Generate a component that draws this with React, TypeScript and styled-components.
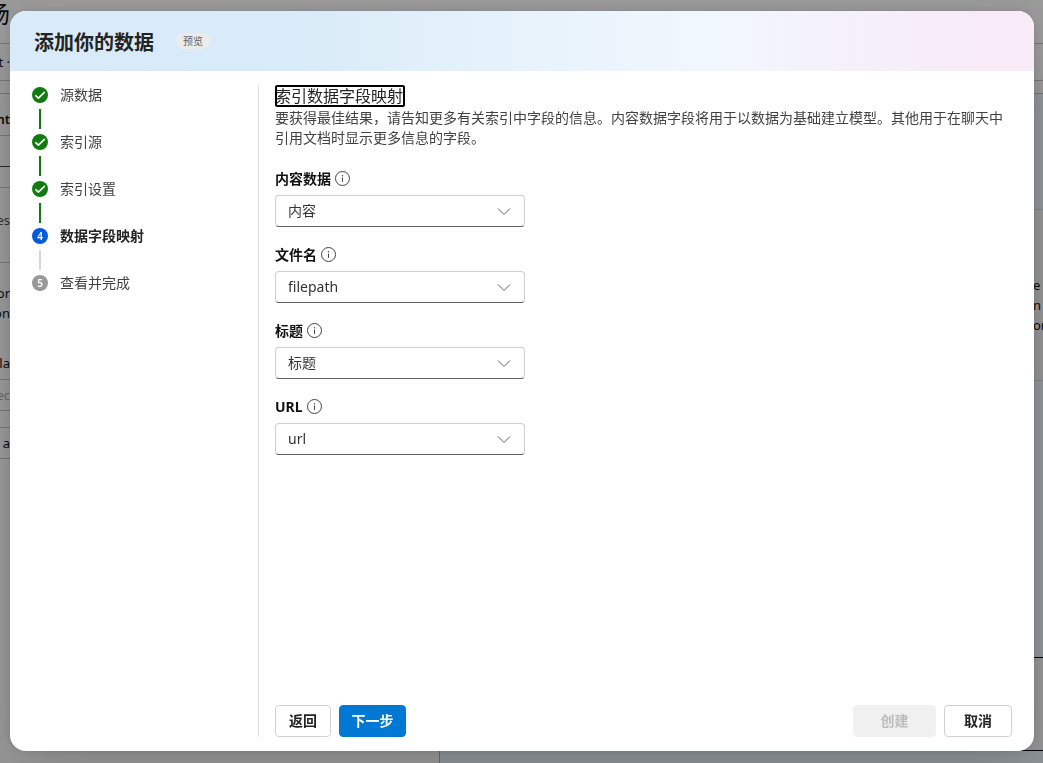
import React from "react";
import styled, { createGlobalStyle, css } from "styled-components";

const GlobalStyle = createGlobalStyle`
  *, *::before, *::after { box-sizing: border-box; }
  html, body, #root { height: 100%; }
  body {
    margin: 0;
    overflow: hidden;
    background: #fff;
    color: #242424;
    font-family: "Noto Sans", "Noto Sans CJK SC", sans-serif;
    font-size: 14px;
    line-height: 20px;
  }
  button, select { font: inherit; }
  h1, h2, p, ol { margin: 0; padding: 0; }
`;

/* ---------- Page behind the dialog ---------- */

const Page = styled.div`
  height: 100%;
  display: flex;
  flex-direction: column;
  overflow: hidden;
  color: #111;
  font-size: 13px;
`;

const PageBar = styled.div<{ $height: number }>`
  flex: none;
  height: ${(p) => p.$height}px;
  border-bottom: 1px solid #c4c4c4;
  display: flex;
  align-items: center;
`;

const Clip = styled.div`
  width: 10px;
  flex: none;
  display: flex;
  justify-content: flex-end;
  overflow: hidden;
  white-space: nowrap;
`;

const PageTitle = styled(Clip)`
  font-size: 24px;
  line-height: 28px;
  padding-bottom: 16px;
`;

const PageBody = styled.div`
  flex: 1;
  min-height: 0;
  display: flex;
`;

const Sidebar = styled.div`
  width: 440px;
  flex: none;
  border-right: 1px solid #b0b0b0;
`;

const SideRow = styled.div<{ $height: number; $line?: string; $strong?: boolean; $tone?: string }>`
  height: ${(p) => p.$height}px;
  border-bottom: 1px solid ${(p) => p.$line ?? "#c4c4c4"};
  display: flex;
  flex-direction: column;
  justify-content: center;
  font-weight: ${(p) => (p.$strong ? 600 : 400)};
  color: ${(p) => p.$tone ?? "#111"};
`;

const RowGap = styled.div`
  height: 30px;
`;

const ShortRow = styled(SideRow)`
  justify-content: flex-end;
  padding-bottom: 32px;
`;

const TallRow = styled(SideRow)`
  justify-content: flex-end;
  padding-bottom: 6px;
`;

const ChatArea = styled.div`
  flex: 1;
  min-width: 0;
  background: #edf8ff;
  display: flex;
  flex-direction: column;
`;

const ChatCard = styled.div`
  height: 172px;
  margin-top: 115px;
  background: #f6f6f6;
  border: solid #d8d8d8;
  border-width: 1px 0;
  display: flex;
  flex-direction: column;
  align-items: flex-end;
  justify-content: center;
  padding-top: 20px;
`;

const CardClip = styled.div`
  width: 10px;
  overflow: hidden;
  white-space: nowrap;
`;

const ChatInput = styled.div`
  height: 94px;
  margin-top: auto;
  margin-bottom: 12px;
  border: solid #000;
  border-width: 1px 0;
  background: #fafafa;
`;

/* ---------- Dialog ---------- */

const Backdrop = styled.div`
  position: fixed;
  inset: 0;
  padding: 11px 9px 12px 10px;
  background: rgba(0, 0, 0, 0.4);
  display: flex;
`;

const Dialog = styled.div`
  flex: 1;
  min-width: 0;
  display: flex;
  flex-direction: column;
  overflow: hidden;
  border-radius: 16px;
  background: #fff;
  box-shadow: 0 0 8px rgba(0, 0, 0, 0.12), 0 32px 64px rgba(0, 0, 0, 0.14);
`;

const Header = styled.header`
  height: 60px;
  flex: none;
  display: flex;
  align-items: center;
  gap: 22px;
  padding: 4px 24px 0;
  background: linear-gradient(90deg, #d9eaf8 0%, #d8ebf8 27%, #e6f2fb 48%, #f1f7fe 69%, #f8eaf7 95%);
`;

const Title = styled.h1`
  font-size: 20px;
  line-height: 28px;
  font-weight: 700;
`;

const Badge = styled.span`
  margin-bottom: 4px;
  padding: 0 7px;
  border-radius: 8px;
  background: #ebebeb;
  color: #616161;
  font-size: 10px;
  line-height: 16px;
`;

const Body = styled.div`
  flex: 1;
  min-height: 0;
  display: flex;
  padding: 14px 22px;
`;

const Steps = styled.ol`
  width: 226px;
  flex: none;
  list-style: none;
`;

const Step = styled.li<{ $current?: boolean }>`
  display: grid;
  grid-template-columns: 16px 1fr;
  column-gap: 12px;
  align-items: center;
  color: ${(p) => (p.$current ? "#242424" : "#424242")};
  font-weight: ${(p) => (p.$current ? 700 : 400)};
`;

const Connector = styled.span<{ $done?: boolean }>`
  justify-self: center;
  width: 2px;
  height: 20px;
  margin: 4px 0 3px;
  background: ${(p) => (p.$done ? "#107c10" : "#d6d6d6")};
`;

const Bullet = styled.span<{ $tone: string }>`
  display: flex;
  align-items: center;
  justify-content: center;
  width: 16px;
  height: 16px;
  border-radius: 50%;
  background: ${(p) => p.$tone};
  color: #fff;
  font-size: 10px;
  line-height: 16px;
  font-weight: 600;
`;

const Content = styled.main`
  flex: 1;
  min-width: 0;
  display: flex;
  flex-direction: column;
  align-items: flex-start;
  padding-left: 16px;
  border-left: 1px solid #dedede;
`;

const Heading = styled.h2`
  margin-bottom: 1px;
  font-size: 16px;
  line-height: 22px;
  font-weight: 400;
  padding-right: 2px;
  border-radius: 2px;
  outline: 2px solid #000;
  outline-offset: -2px;
`;

const Description = styled.p`
  margin-bottom: 21px;
  color: #424242;
`;

const Fields = styled.div`
  display: flex;
  flex-direction: column;
  gap: 18px;
  width: 250px;
`;

const Field = styled.div`
  display: flex;
  flex-direction: column;
  gap: 6px;
`;

const LabelRow = styled.div`
  display: flex;
  align-items: center;
  gap: 4px;
  height: 20px;
`;

const Label = styled.label`
  font-weight: 700;
  color: #111;
`;

const InfoButton = styled.button`
  display: flex;
  padding: 0;
  border: 0;
  background: none;
  color: #424242;
`;

const SelectBox = styled.div`
  display: grid;
  align-items: center;
  > * { grid-area: 1 / 1; }
  > svg { justify-self: end; margin-right: 13px; pointer-events: none; }
`;

const Select = styled.select`
  appearance: none;
  width: 100%;
  height: 32px;
  padding: 0 32px 0 12px;
  border: 1px solid #d1d1d1;
  border-bottom-color: #616161;
  border-radius: 4px;
  background: #fff;
  color: #333;
`;

const Footer = styled.footer`
  align-self: stretch;
  margin-top: auto;
  display: flex;
  gap: 8px;
`;

const Spacer = styled.div`
  flex: 1;
`;

const Button = styled.button<{ $kind?: "primary" | "large" }>`
  height: 32px;
  padding: 0 ${(p) => (p.$kind === "large" ? 19 : 13)}px;
  border: 1px solid #d1d1d1;
  border-radius: 4px;
  background: #fff;
  color: #242424;
  font-weight: 700;
  line-height: 20px;
  ${(p) =>
    p.$kind === "primary" &&
    css`
      min-width: 67px;
      padding: 0 8px;
      border-color: #0078d4;
      background: #0078d4;
      color: #fff;
    `}
  &:disabled {
    min-width: 83px;
    border-color: #f0f0f0;
    background: #f0f0f0;
    color: #bdbdbd;
  }
`;

const CheckMark = () => (
  <svg width="16" height="16" viewBox="0 0 16 16" fill="none" aria-hidden="true">
    <path d="M3.7 8.6 6.4 11.1 12.4 5.4" stroke="#fff" strokeWidth="1.6" strokeLinecap="round" strokeLinejoin="round" />
  </svg>
);

const InfoIcon = () => (
  <svg width="16" height="16" viewBox="0 0 16 16" fill="none" aria-hidden="true">
    <circle cx="7.5" cy="7.5" r="7" stroke="currentColor" />
    <path d="M7.5 6.6v4.2" stroke="currentColor" />
    <circle cx="7.5" cy="4.8" r=".7" fill="currentColor" />
  </svg>
);

const Chevron = () => (
  <svg width="16" height="16" viewBox="0 0 16 16" fill="none" aria-hidden="true">
    <path d="M2 5.5 8 11.5 14 5.5" stroke="#616161" />
  </svg>
);

const steps = [
  { label: "源数据", done: true },
  { label: "索引源", done: true },
  { label: "索引设置", done: true },
  { label: "数据字段映射", current: true },
  { label: "查看并完成" },
];

const fields = [
  { id: "content", label: "内容数据", value: "内容" },
  { id: "filename", label: "文件名", value: "filepath" },
  { id: "title", label: "标题", value: "标题" },
  { id: "url", label: "URL", value: "url" },
];

export default function App() {
  return (
    <>
      <GlobalStyle />
      <Page aria-hidden="true">
        <PageBar $height={44}><PageTitle>场</PageTitle></PageBar>
        <PageBar $height={37}><Clip>t ·</Clip></PageBar>
        <PageBar $height={13} />
        <PageBody>
          <Sidebar>
            <TallRow $height={42} $strong><Clip>nt</Clip></TallRow>
            <SideRow $height={31} $line="#444" />
            <SideRow $height={21} />
            <ShortRow $height={75} $tone="#555"><Clip>es</Clip></ShortRow>
            <TallRow $height={117}>
              <Clip>or</Clip>
              <Clip>on</Clip>
              <RowGap />
              <Clip>la</Clip>
            </TallRow>
            <SideRow $height={31} $tone="#aaa"><Clip>ec</Clip></SideRow>
            <SideRow $height={17} />
            <SideRow $height={31}><Clip>a</Clip></SideRow>
          </Sidebar>
          <ChatArea>
            <ChatCard>
              <CardClip>e</CardClip>
              <CardClip>n</CardClip>
              <CardClip>or</CardClip>
            </ChatCard>
            <ChatInput />
          </ChatArea>
        </PageBody>
      </Page>
      <Backdrop>
        <Dialog role="dialog" aria-modal="true" aria-labelledby="dialog-title">
          <Header>
            <Title id="dialog-title">添加你的数据</Title>
            <Badge>预览</Badge>
          </Header>
          <Body>
            <Steps>
              {steps.map((step, i) => (
                <Step key={step.label} $current={step.current} aria-current={step.current ? "step" : undefined}>
                  <Bullet $tone={step.done ? "#107c10" : step.current ? "#015cda" : "#999"}>
                    {step.done ? <CheckMark /> : i + 1}
                  </Bullet>
                  <span>{step.label}</span>
                  {i < steps.length - 1 && <Connector $done={step.done} />}
                </Step>
              ))}
            </Steps>
            <Content>
              <Heading tabIndex={-1}>索引数据字段映射</Heading>
              <Description>
                要获得最佳结果，请告知更多有关索引中字段的信息。内容数据字段将用于以数据为基础建立模型。其他用于在聊天中引用文档时显示更多信息的字段。
              </Description>
              <Fields>
                {fields.map((field) => (
                  <Field key={field.id}>
                    <LabelRow>
                      <Label htmlFor={field.id}>{field.label}</Label>
                      <InfoButton type="button" aria-label={field.label}><InfoIcon /></InfoButton>
                    </LabelRow>
                    <SelectBox>
                      <Select id={field.id} defaultValue={field.value}>
                        <option>{field.value}</option>
                      </Select>
                      <Chevron />
                    </SelectBox>
                  </Field>
                ))}
              </Fields>
              <Footer>
                <Button type="button">返回</Button>
                <Button type="button" $kind="primary">下一步</Button>
                <Spacer />
                <Button type="button" disabled>创建</Button>
                <Button type="button" $kind="large">取消</Button>
              </Footer>
            </Content>
          </Body>
        </Dialog>
      </Backdrop>
    </>
  );
}
